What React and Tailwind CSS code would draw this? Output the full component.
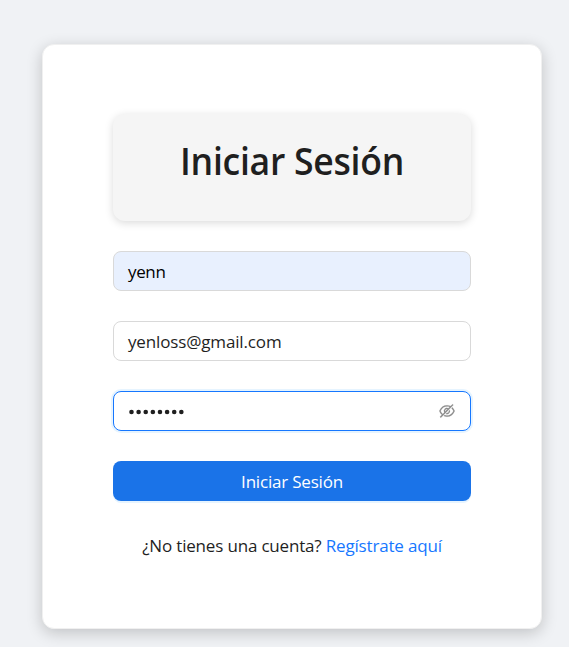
import { AiOutlineEyeInvisible } from "react-icons/ai";

const field =
  "flex h-10 items-center rounded-lg border px-3.5 text-[17px] leading-6";

export default function App() {
  return (
    <main className="h-[647px] w-[569px] overflow-hidden bg-[#f0f2f5] pt-11 pl-[42px] font-['Open_Sans','Noto_Sans',sans-serif] text-[#1f1f1f]">
      <section className="h-[585px] w-[500px] rounded-xl border border-[#f0f0f0] bg-white px-[70px] pt-[69px] shadow-[0_4px_16px_rgba(0,0,0,0.2)]">
        <header className="h-[107px] rounded-xl bg-[#f5f5f5] pt-[23px] text-center shadow-[0_2px_8px_rgba(0,0,0,0.15)]">
          <h1 className="scale-x-[0.937] text-[38px] leading-[46px] font-semibold tracking-[-0.3px] whitespace-nowrap">
            Iniciar Sesión
          </h1>
        </header>
        <form className="mt-[30px] flex flex-col gap-[30px]">
          <div className={`${field} border-[#d9d9d9] bg-[#e8f0fe] text-black`}>
            <span className="pt-0.5 tracking-[-0.35px]">yenn</span>
          </div>
          <div className={`${field} border-[#d9d9d9] bg-white`}>
            <span className="pt-0.5 tracking-[-0.15px]">yenloss@gmail.com</span>
          </div>
          <div
            className={`${field} justify-between border-[#1677ff] bg-white shadow-[0_0_0_2px_rgba(5,145,255,0.1)]`}
          >
            <svg className="mt-0.5 h-1.5 w-[60px] fill-[#1f1f1f]" viewBox="0 0 60 6">
              {Array.from({ length: 8 }, (_, i) => (
                <circle key={i} cx={3.5 + i * 7.12} cy={3} r={2.3} />
              ))}
            </svg>
            <AiOutlineEyeInvisible
              className="mb-px size-[18px] text-[#8c8c8c]"
              strokeWidth={8}
            />
          </div>
          <button
            type="button"
            className="h-10 rounded-lg bg-[#1a73e8] pt-0.5 text-[17px] leading-6 tracking-[-0.2px] text-white shadow-[0_2px_0_rgba(5,145,255,0.1)]"
          >
            Iniciar Sesión
          </button>
        </form>
        <p className="mt-[33px] text-center text-[17px] leading-6 tracking-[-0.18px] whitespace-nowrap">
          ¿No tienes una cuenta?{" "}
          <a className="text-[#1677ff]">Regístrate aquí</a>
        </p>
      </section>
    </main>
  );
}
